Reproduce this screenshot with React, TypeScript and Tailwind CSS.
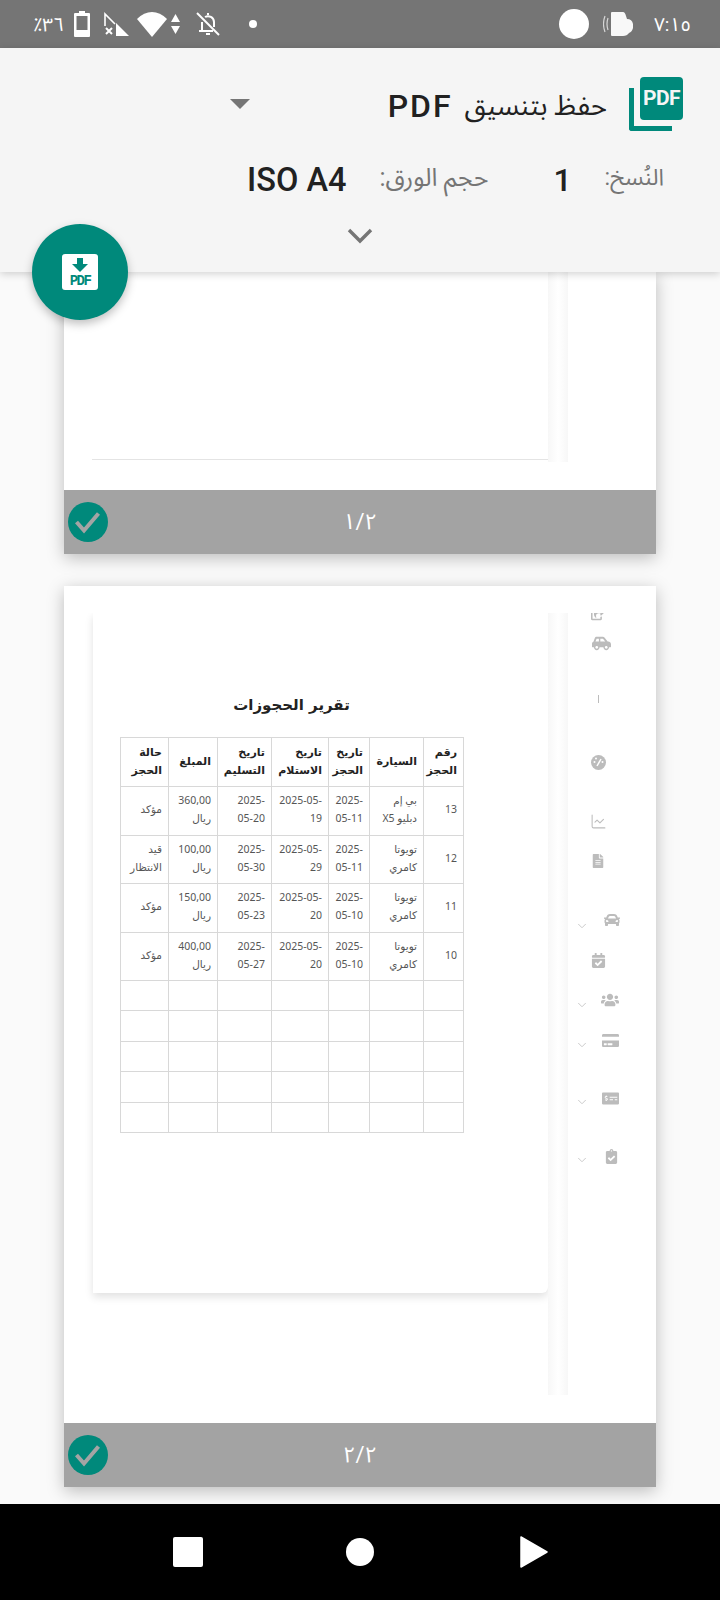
import React from "react";
import { ChevronDown, ChartLine } from "lucide-react";
import {
  FaCarSide, FaCar, FaFileAlt, FaCalendarCheck, FaUsers, FaCreditCard, FaMoneyCheckAlt, FaClipboardCheck, FaShareSquare,
} from "react-icons/fa";

const rows = [
  ["13", "بي إم دبليو X5", "2025-05-11", "2025-05-19", "2025-05-20", "360,00 ريال", "مؤكد"],
  ["12", "تويوتا كامري", "2025-05-11", "2025-05-29", "2025-05-30", "100,00 ريال", "قيد الانتظار"],
  ["11", "تويوتا كامري", "2025-05-10", "2025-05-20", "2025-05-23", "150,00 ريال", "مؤكد"],
  ["10", "تويوتا كامري", "2025-05-10", "2025-05-20", "2025-05-27", "400,00 ريال", "مؤكد"],
];
const heads = ["رقم الحجز", "السيارة", "تاريخ الحجز", "تاريخ الاستلام", "تاريخ التسليم", "المبلغ", "حالة الحجز"];
const widths = [40, 54, 41, 57, 54, 49, 48];

function Check() {
  return (
    <div className="ml-1 flex h-10 w-10 items-center justify-center rounded-full bg-[#00897b]">
      <svg width="32" height="32" viewBox="0 0 32 32" fill="none">
        <path d="M4.500 16 L12 24.500 L26.500 7.500" stroke="#a4a4a4" strokeWidth="4" />
      </svg>
    </div>
  );
}

function PageBar({ label }: { label: string }) {
  return (
    <div className="flex h-16 items-center bg-[#a3a3a3]">
      <Check />
      <div dir="ltr" className="ml-[-44px] flex-1 text-center text-[22px] leading-none text-white">{label}</div>
    </div>
  );
}

function Side({ mt, ml, chevron, chevronTop, children }: { mt: string; ml: string; chevron?: boolean; chevronTop?: string; children: React.ReactNode }) {
  return (
    <div className={`flex items-start text-[#bcbcbc] ${mt}`}>
      {chevron ? <ChevronDown size={14} strokeWidth={1.5} className={`mb-[-14px] ml-[7px] shrink-0 text-[#c4c4c4] ${chevronTop}`} /> : null}
      <div className={ml}>{children}</div>
    </div>
  );
}

export default function App() {
  return (
    <div className="relative flex h-[1600px] w-[720px] flex-col overflow-hidden bg-[#fafafa] font-['Roboto','Noto_Sans_Arabic','DejaVu_Sans',sans-serif]">
      {/* status bar */}
      <div className="flex h-12 shrink-0 items-center bg-[#757575] text-white">
        <span dir="rtl" className="ml-[33px] w-[31px] text-[19px] leading-none">٣٦٪</span>
        <svg className="ml-[10px]" width="16" height="26" viewBox="0 0 16 26">
          <path fillRule="evenodd" fill="white" d="M5 0h6v2h4a1 1 0 0 1 1 1v22a1 1 0 0 1-1 1H1a1 1 0 0 1-1-1V3a1 1 0 0 1 1-1h4zM2.500 5v14h11V5z" />
        </svg>
        <svg className="ml-[14px]" width="25" height="24" viewBox="0 0 25 24">
          <path fill="white" d="M12 11 25 24H12z" />
          <path fill="none" stroke="white" strokeWidth="1.600" d="M1 14V2l10 10" />
          <path fill="none" stroke="white" strokeWidth="2" d="M2 16l6 6M8 16l-6 6" />
        </svg>
        <svg className="ml-2" width="30" height="25" viewBox="0 0 30 25">
          <path fill="white" d="M15 25 0 7Q7 0 15 0t15 7z" />
        </svg>
        <svg className="ml-1" width="9" height="20" viewBox="0 0 9 20">
          <path fill="white" d="M4.500 0 9 8H0zM0 12h9l-4.500 8z" />
        </svg>
        <svg className="ml-4" width="24" height="24" viewBox="0 0 24 24" fill="none" stroke="white" strokeWidth="2">
          <path d="M1 1 23 23" />
          <path d="M3 19h14M6 19v-9M18 15V10a6 6 0 0 0-9-5M10 22h4M12 3V1" />
        </svg>
        <div className="ml-[29px] h-2 w-2 rounded-full bg-white" />
        <div className="ml-auto h-[30px] w-[30px] rounded-full bg-white" />
        <svg className="ml-[14px]" width="30" height="26" viewBox="0 0 30 26">
          <path fill="white" d="M8 2q0-1 1-1h11q2 0 3 4l1 3q5 0 6 5v4q-1 4-4 5-2 3-6 3H9q-1 0-1-1z" opacity="0.95" />
          <path fill="none" stroke="white" strokeWidth="1.200" opacity="0.7" d="M5 7q-2 6 0 12M2 5q-3 8 0 16" />
        </svg>
        <span dir="ltr" className="ml-[21px] mr-[33px] w-[33px] text-[19px] leading-none">٧:١٥</span>
      </div>

      {/* header */}
      <div className="relative z-10 flex h-[224px] shrink-0 flex-col bg-[#f5f5f5] text-[#212121] shadow-[0_2px_8px_rgba(0,0,0,0.18)]">
        <div className="mt-[29px] flex h-[54px] items-center">
          <svg className="ml-[230px]" width="20" height="10" viewBox="0 0 20 10"><path fill="#757575" d="M0 0h20L10 10z" /></svg>
          <div dir="rtl" className="ml-auto mr-[22px] flex items-center gap-3 pt-1 leading-none">
            <span className="text-[27.500px] font-normal">حفظ بتنسيق</span>
            <span className="text-[32px] font-medium tracking-[2px]">PDF</span>
          </div>
          <div className="relative mr-[37px] h-[54px] w-[54px]">
            <div className="mt-[11px] h-[43px] w-[43px] rounded-bl-[3px] border-b-[5px] border-l-[5px] border-[#00897b]" />
            <div className="absolute right-0 top-0 flex h-[43px] w-[43px] items-center justify-center rounded-[4px] bg-[#00897b] text-[21px] font-bold leading-none tracking-[-0.5px] text-[#f5f5f5]">PDF</div>
          </div>
        </div>
        <div className="mt-[29px] flex h-10 items-center justify-end">
          <span className="text-[32.500px] font-medium leading-none">ISO A4</span>
          <span dir="rtl" className="ml-[33px] pb-[6px] text-[25px] leading-none text-[#757575]">حجم الورق:</span>
          <span className="ml-[65px] text-[32px] font-medium leading-none">1</span>
          <span dir="rtl" className="ml-[33px] mr-[56px] pb-[6px] text-[23px] leading-none text-[#757575]">النُسخ:</span>
        </div>
        <div className="mt-[28px] flex justify-center">
          <svg width="26" height="16" viewBox="0 0 26 16" fill="none"><path d="M2 2 13 13 24 2" stroke="#757575" strokeWidth="3.400" /></svg>
        </div>
      </div>

      {/* FAB */}
      <div className="absolute left-8 top-[224px] z-20 flex h-24 w-24 items-center justify-center rounded-full bg-[#00897b] shadow-[0_4px_10px_rgba(0,0,0,0.25)]">
        <div className="flex h-9 w-9 flex-col items-center rounded-[3px] bg-white pt-1 text-[#00897b]">
          <svg width="16" height="14" viewBox="0 0 16 14"><path fill="#00897b" d="M5 0h6v6h5l-8 8-8-8h5z" /></svg>
          <span className="mt-[3px] font-['Liberation_Mono',monospace] text-[14px] font-bold leading-[12px] tracking-[-1.5px]">PDF</span>
        </div>
      </div>

      {/* preview */}
      <div className="flex-1 overflow-hidden">
        {/* page 1 */}
        <div className="mx-16 w-[592px] bg-white shadow-[0_4px_16px_rgba(0,0,0,0.25)]">
          <div className="flex h-[218px] bg-white">
            <div className="w-[484px] pl-7">
              <div className="h-[188px] border-b border-[#e4e4e4]" />
            </div>
            <div className="h-[190px] w-5 bg-linear-to-r from-[#f7f7f7] via-white to-[#f7f7f7]" />
          </div>
          <PageBar label="١/٢" />
        </div>

        {/* page 2 */}
        <div className="mx-16 mt-8 w-[592px] bg-white shadow-[0_4px_16px_rgba(0,0,0,0.25)]">
          <div className="flex h-[837px] pt-[27px]">
            <div className="h-[700px] w-[484px] overflow-hidden pl-[29px]">
              <div className="h-[680px] rounded-br-[6px] bg-white pl-[27px] pt-[80px] shadow-[0_4px_8px_rgba(0,0,0,0.12)]">
                <div dir="rtl" className="w-[343px] text-center font-['DejaVu_Sans',sans-serif] text-[15px] font-bold leading-[24px] text-[#222]">تقرير الحجوزات</div>
                <table dir="rtl" className="mt-5 w-[343px] table-fixed border-collapse font-['Noto_Sans','DejaVu_Sans',sans-serif] text-[10.5px] leading-[18px] text-[#555]">
                  <colgroup>
                    {widths.map((w, i) => <col key={i} style={{ width: w }} />)}
                  </colgroup>
                  <thead>
                    <tr className="h-[49px]">
                      {heads.map((h) => (
                        <th key={h} className="border border-[#d8d8d8] px-[6px] text-right font-['DejaVu_Sans',sans-serif] text-[11px] font-bold leading-[18px] text-[#222]">{h}</th>
                      ))}
                    </tr>
                  </thead>
                  <tbody>
                    {rows.map((r) => (
                      <tr key={r[0]} className="h-[48.500px]">
                        {r.map((c, i) => (
                          <td key={i} className="border border-[#d8d8d8] px-[6px] pb-[3px] text-right">{c}</td>
                        ))}
                      </tr>
                    ))}
                    {[0, 1, 2, 3, 4].map((k) => (
                      <tr key={k} className="h-[30.400px]">
                        {widths.map((_, i) => <td key={i} className="border border-[#d8d8d8]" />)}
                      </tr>
                    ))}
                  </tbody>
                </table>
              </div>
            </div>
            <div className="h-[782px] w-5 bg-linear-to-r from-[#f7f7f7] via-white to-[#f7f7f7]" />
            <div className="h-[782px] w-[88px] overflow-hidden">
              <Side mt="mt-[-6px]" ml="ml-[23px]"><FaShareSquare size={14} /></Side>
              <Side mt="mt-[13px]" ml="ml-6"><FaCarSide size={19} /></Side>
              <div className="ml-[30px] mt-[42px] h-2 w-px bg-[#bcbcbc]" />
              <Side mt="mt-[52px]" ml="ml-[23px]">
                <svg width="15" height="15" viewBox="0 0 15 15">
                  <circle cx="7.500" cy="7.500" r="7.500" fill="#bcbcbc" />
                  <path d="M6 11 10 4" stroke="white" strokeWidth="1.500" />
                  <circle cx="3.500" cy="7" r="1" fill="white" />
                  <circle cx="5" cy="3.500" r="1" fill="white" />
                  <circle cx="11.500" cy="7" r="1" fill="white" />
                </svg>
              </Side>
              <Side mt="mt-[43px]" ml="ml-[22px]"><ChartLine size={17} strokeWidth={1.5} /></Side>
              <Side mt="mt-[24px]" ml="ml-[23px]"><FaFileAlt size={14} /></Side>
              <Side mt="mt-[44px]" ml="ml-[15px]" chevron chevronTop="mt-[7px]"><FaCar size={16} /></Side>
              <Side mt="mt-[25px]" ml="ml-[23px]"><FaCalendarCheck size={15} /></Side>
              <Side mt="mt-[23px]" ml="ml-3" chevron chevronTop="mt-[7px]"><FaUsers size={18} /></Side>
              <Side mt="mt-[23px]" ml="ml-[13px]" chevron chevronTop="mt-[6px]"><FaCreditCard size={17} /></Side>
              <Side mt="mt-[41px]" ml="ml-[13px]" chevron chevronTop="mt-[5px]"><FaMoneyCheckAlt size={17} /></Side>
              <Side mt="mt-[42px]" ml="ml-[15px]" chevron chevronTop="mt-[4px]"><FaClipboardCheck size={15} /></Side>
            </div>
          </div>
          <PageBar label="٢/٢" />
        </div>
      </div>

      {/* nav bar */}
      <div className="flex h-24 shrink-0 items-center bg-black">
        <div className="ml-[173px] h-[30px] w-[30px] rounded-[2px] bg-white" />
        <div className="ml-[143px] h-7 w-7 rounded-full bg-white" />
        <svg className="ml-[146px]" width="28" height="32" viewBox="0 0 28 32"><path fill="white" stroke="white" strokeWidth="1.500" strokeLinejoin="round" d="M1 1 27 16 1 31z" /></svg>
      </div>
    </div>
  );
}
